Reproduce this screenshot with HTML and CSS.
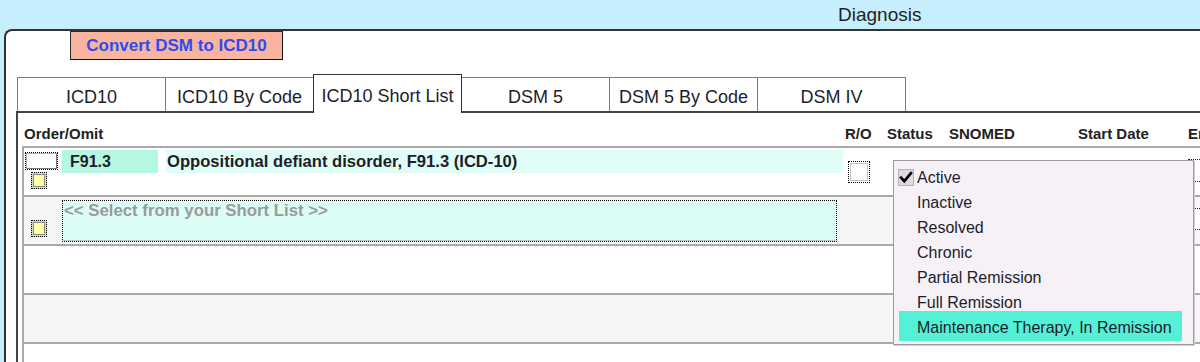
FILE: index.html
```html
<!DOCTYPE html>
<html>
<head>
<meta charset="utf-8">
<title>Diagnosis</title>
<link rel="stylesheet" href="styles.css">
</head>
<body>
<div class="titlebar">Diagnosis</div>
<div class="panel">
  <div class="btnrow"><button class="convert">Convert DSM to ICD10</button></div>
  <div class="tabs">
    <div class="tab">ICD10</div>
    <div class="tab">ICD10 By Code</div>
    <div class="tab active">ICD10 Short List</div>
    <div class="tab">DSM 5</div>
    <div class="tab">DSM 5 By Code</div>
    <div class="tab">DSM IV</div>
  </div>
  <div class="tabpanel">
    <div class="head">
      <div class="h-order">Order/Omit</div>
      <div class="h-ro">R/O</div>
      <div class="h-status">Status</div>
      <div class="h-snomed">SNOMED</div>
      <div class="h-start">Start Date</div>
      <div class="h-end">End Date</div>
    </div>
    <div class="table">
      <div class="row">
        <div class="order">
          <div class="ordbox"></div>
          <div class="ychk"><span></span></div>
        </div>
        <div class="fields">
          <div class="code">F91.3</div>
          <div class="desc">Oppositional defiant disorder, F91.3 (ICD-10)</div>
        </div>
        <div class="ro"><div class="rochk"><span></span></div></div>
        <div class="status"></div>
        <div class="snomed"></div>
        <div class="start"></div>
        <div class="end"><div class="datebox r1"></div></div>
      </div>
      <div class="row alt">
        <div class="order order2">
          <div class="ychk"><span></span></div>
        </div>
        <div class="fields">
          <div class="select">&lt;&lt; Select from your Short List &gt;&gt;</div>
        </div>
        <div class="ro"></div>
        <div class="status"></div>
        <div class="snomed"></div>
        <div class="start"></div>
        <div class="end"><div class="datebox r2"></div></div>
      </div>
      <div class="row"></div>
      <div class="row alt"></div>
      <div class="row"></div>
    </div>
  </div>
</div>
<div class="dropdown">
  <div class="item"><span class="check"><svg width="14" height="15" viewBox="0 0 14 15"><path d="M2 7.5 L5.3 11.2 L12 3.2" fill="none" stroke="#000" stroke-width="2.6" stroke-linecap="square"/></svg></span>Active</div>
  <div class="item">Inactive</div>
  <div class="item">Resolved</div>
  <div class="item">Chronic</div>
  <div class="item">Partial Remission</div>
  <div class="item">Full Remission</div>
  <div class="item hl">Maintenance Therapy, In Remission</div>
</div>
</body>
</html>
```
FILE: styles.css
```css
html, body {
  margin: 0;
  padding: 0;
}
body {
  position: relative;
  width: 1200px;
  height: 362px;
  overflow: hidden;
  background: #c6eefc;
  font-family: "Liberation Sans", Arial, sans-serif;
  color: #1e1e2a;
}
.titlebar {
  height: 29px;
  line-height: 29px;
  font-size: 19px;
  padding-left: 838px;
  color: #222;
}
.panel {
  margin-left: 4px;
  height: 340px;
  background: #fff;
  border-top: 2px solid #333;
  border-left: 2px solid #333;
  border-top-left-radius: 8px;
  overflow: hidden;
}
.btnrow {
  padding-left: 64px;
  height: 29px;
}
.convert {
  display: block;
  width: 213px;
  height: 29px;
  margin: 0;
  padding: 0;
  background: #f9b4a0;
  border: 1px solid #2a2a2a;
  border-right-color: #111;
  border-bottom-color: #111;
  font-family: "Liberation Sans", Arial, sans-serif;
  font-weight: bold;
  font-size: 17px;
  color: #2d4cf0;
}
.tabs {
  display: flex;
  align-items: flex-end;
  margin: 14px 0 0 11px;
  height: 37px;
}
.tab {
  box-sizing: border-box;
  width: 149px;
  height: 34px;
  margin-right: -1px;
  border: 1px solid #7a7a7a;
  border-bottom: none;
  display: flex;
  align-items: center;
  justify-content: center;
  padding-top: 6px;
  font-size: 18px;
  color: #1e1e2a;
  background: #fff;
}
.tab.active {
  position: relative;
  z-index: 1;
  height: 39px;
  margin-bottom: -2px;
  border-color: #333;
  padding-top: 4px;
}
.tabpanel {
  margin-left: 10px;
  border-top: 2px solid #444;
  border-left: 2px solid #444;
  height: 260px;
}
.head {
  display: flex;
  height: 33px;
  box-sizing: border-box;
  padding: 12px 0 0 6px;
  font-size: 15px;
  line-height: 18px;
  font-weight: bold;
  color: #222;
  white-space: nowrap;
}
.head > div { flex: none; }
.h-order { width: 821px; }
.h-ro { width: 42px; }
.h-status { width: 62px; }
.h-snomed { width: 129px; }
.h-start { width: 110px; }
.table {
  margin-left: 4px;
  border-top: 2px solid #a9a9a9;
  border-left: 2px solid #a9a9a9;
}
.row {
  display: flex;
  height: 47px;
  border-bottom: 2px solid #a9a9a9;
  background: #fff;
}
.row.alt {
  background: #f6f6f6;
}
.order {
  width: 38px;
  flex: none;
  padding-left: 1px;
  box-sizing: border-box;
}
.order2 {
  padding-top: 23px;
}
.ordbox {
  width: 33px;
  height: 18px;
  box-sizing: border-box;
  margin-top: 4px;
  border: 1px dotted #000;
  box-shadow: inset 1px 1px 0 #b0b0b0, inset -1px -1px 0 #7a7a7a;
  background: #fff;
}
.ychk {
  width: 16px;
  height: 17px;
  box-sizing: border-box;
  margin: 2px 0 0 6px;
  border: 1px dotted #000;
  padding: 1px;
  background: #d8d8c8;
}
.order2 .ychk {
  margin-top: 0;
}
.ychk span {
  display: block;
  height: 100%;
  box-sizing: border-box;
  border: 1px solid #8a8a8a;
  background: #ffffa6;
}
.fields {
  width: 783px;
  flex: none;
  display: flex;
}
.code {
  width: 96px;
  height: 23px;
  margin-top: 2px;
  box-sizing: border-box;
  padding-left: 8px;
  background: #b4f7e2;
  font-weight: bold;
  font-size: 16px;
  line-height: 23px;
}
.desc {
  width: 677px;
  height: 23px;
  margin: 2px 0 0 8px;
  box-sizing: border-box;
  padding-left: 1px;
  background: #e0fdf8;
  font-weight: bold;
  font-size: 16.6px;
  line-height: 23px;
  white-space: nowrap;
}
.select {
  width: 775px;
  height: 42px;
  margin-top: 3px;
  box-sizing: border-box;
  border: 1px dotted #000;
  box-shadow: inset 0 -1px 0 #b8c8c4;
  padding-left: 1px;
  background: #dcfdf6;
  color: #9a9a9a;
  font-weight: bold;
  font-size: 16.8px;
  line-height: 20px;
}
.ro {
  width: 42px;
  flex: none;
}
.rochk {
  width: 22px;
  height: 22px;
  box-sizing: border-box;
  margin: 13px 0 0 3px;
  border: 1px dotted #000;
  padding: 1px;
}
.rochk span {
  display: block;
  height: 100%;
  box-sizing: border-box;
  border: 1px solid #c0c0c0;
  background: #fff;
}
.status { width: 62px; flex: none; }
.snomed { width: 129px; flex: none; }
.start { width: 110px; flex: none; }
.end { flex: none; width: 120px; }
.datebox {
  width: 110px;
  height: 23px;
  box-sizing: border-box;
  border: 1px dotted #222;
  background: #fff;
}
.datebox.r1 { margin-top: 11px; }
.datebox.r2 { margin-top: 11px; height: 22px; }
.dropdown {
  position: absolute;
  left: 893px;
  top: 160px;
  width: 301px;
  height: 185px;
  box-sizing: border-box;
  border: 1px solid #9c9c9c;
  box-shadow: 1px 1px 0 #d0d0d0;
  background: #f6f1f6;
  padding-top: 4px;
  z-index: 5;
}
.item {
  display: flex;
  align-items: center;
  height: 25px;
  padding-left: 23px;
  font-size: 16px;
  color: #1c1c2c;
  white-space: nowrap;
}
.check {
  display: flex;
  align-items: center;
  justify-content: center;
  width: 16px;
  height: 17px;
  box-sizing: border-box;
  margin-left: -19px;
  margin-right: 3px;
  border: 1px solid #b4b4b4;
  background: #dedade;
}
.item.hl {
  height: 30px;
  margin: -4px 11px 0 5px;
  padding-left: 18px;
  padding-top: 3px;
  box-sizing: border-box;
  background: #55f1d6;
}
```
